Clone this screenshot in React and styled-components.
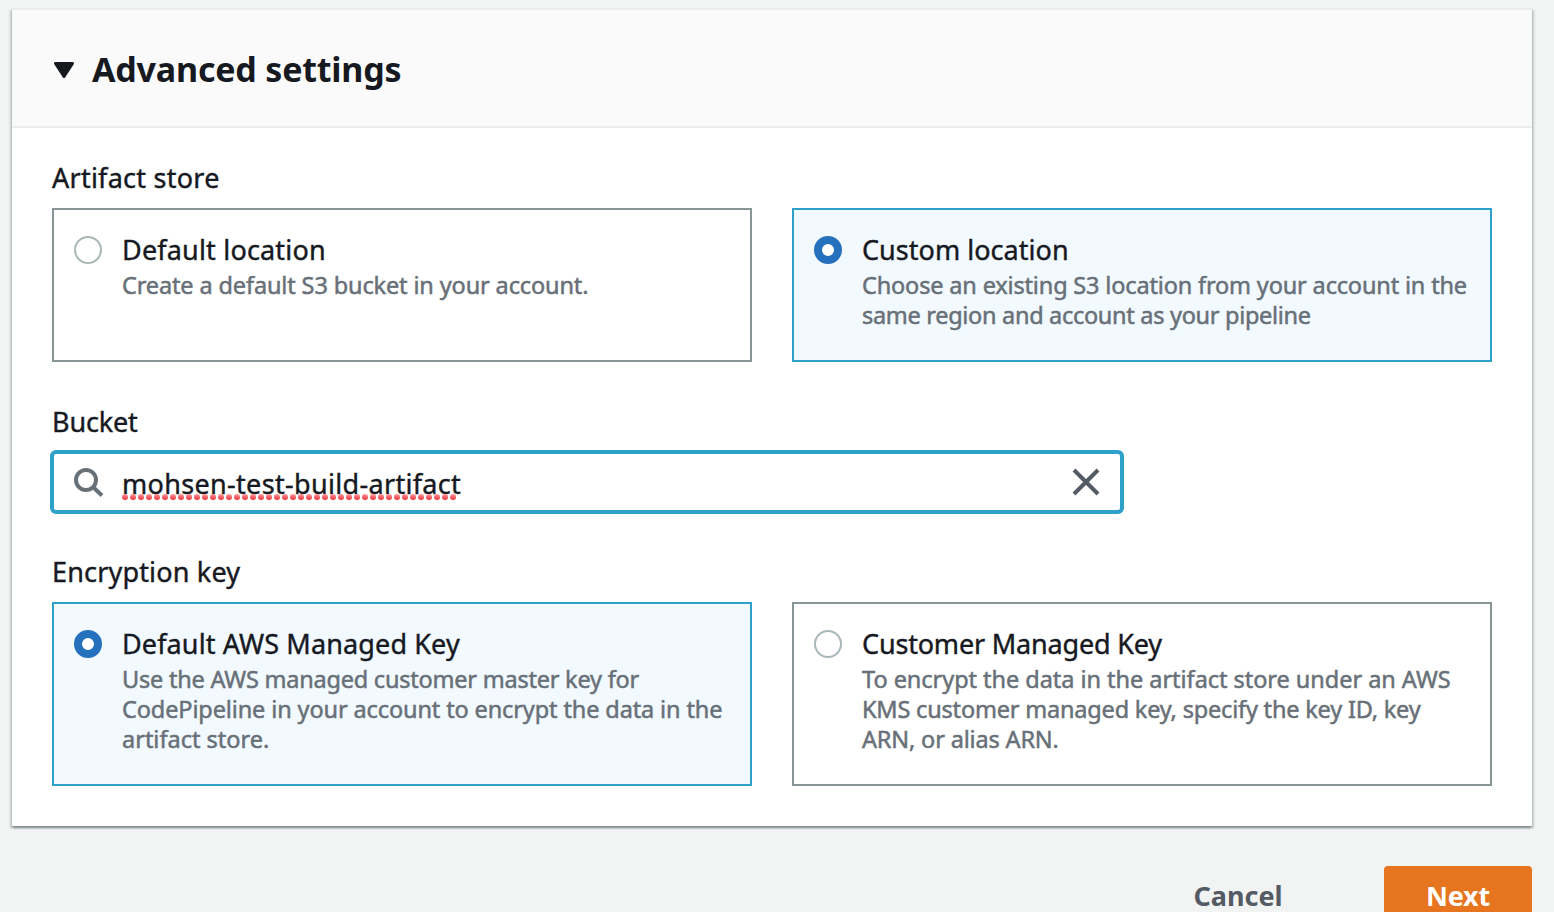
import React from 'react';
import styled, { createGlobalStyle } from 'styled-components';

const GlobalStyle = createGlobalStyle`
  * { box-sizing: border-box; }
  body {
    margin: 0;
    height: 912px;
    overflow: hidden;
    background: #f2f3f3;
    color: #16191f;
    font-family: 'Noto Sans', 'Open Sans', sans-serif;
  }
`;

const Page = styled.main`
  padding: 8px 22px 0 12px;
`;

const Panel = styled.section`
  border-top: 2px solid #eaeded;
  background: #fff;
  box-shadow:
    0 2px 2px 0 rgba(0, 28, 36, 0.3),
    2px 2px 2px 0 rgba(0, 28, 36, 0.15),
    -2px 2px 2px 0 rgba(0, 28, 36, 0.15);
`;

const PanelHeader = styled.header`
  display: flex;
  align-items: center;
  gap: 18px;
  height: 118px;
  padding: 4px 42px 0;
  border-bottom: 2px solid #eaeded;
  background: #fafafa;
`;

const PanelTitle = styled.h2`
  margin: 0;
  padding-bottom: 2px;
  font-size: 34px;
  font-weight: 700;
  line-height: 46px;
  letter-spacing: -0.2px;
`;

const PanelBody = styled.div`
  display: flex;
  flex-direction: column;
  padding: 32px 40px 40px;
`;

const Field = styled.div`
  display: flex;
  flex-direction: column;
  margin-bottom: ${(p) => p.$after || 0}px;
`;

const Label = styled.span`
  margin-bottom: ${(p) => p.$gap ?? 12}px;
  font-size: 27px;
  line-height: 36px;
  letter-spacing: ${(p) => p.$tracking}px;
  white-space: nowrap;
  -webkit-text-stroke: 0.4px currentColor;
`;

const TileGrid = styled.div`
  display: grid;
  grid-template-columns: 1fr 1fr;
  gap: 40px;
`;

const Tile = styled.label`
  display: flex;
  gap: 20px;
  padding: 22px 0 30px 20px;
  border: 2px solid ${(p) => (p.$selected ? '#2ea1cb' : '#879596')};
  background: ${(p) => (p.$selected ? '#f2f9ff' : '#fff')};
`;

const Radio = styled.span`
  flex: none;
  width: 28px;
  height: 28px;
  margin-top: 4px;
  border: ${(p) => (p.$selected ? '8px solid #2571bd' : '2px solid #aab7b8')};
  border-radius: 50%;
  background: #fff;
`;

const TileText = styled.div`
  display: flex;
  flex-direction: column;
`;

const TileDescription = styled.div`
  color: #687078;
  font-size: 23.5px;
  line-height: 30px;
  white-space: nowrap;
  -webkit-text-stroke: 0.5px currentColor;
`;

const Line = styled.span`
  display: block;
  letter-spacing: ${(p) => p.$tracking}px;
`;

const SearchBox = styled.div`
  display: flex;
  align-items: center;
  width: 1074px;
  height: 64px;
  margin-left: -2px;
  padding: 0 20px;
  border: 4px solid #2ea1cb;
  border-radius: 6px;
  background: #fff;
`;

const SearchValue = styled.span`
  position: relative;
  margin: 3px auto 0 18px;
  font-size: 27px;
  line-height: 36px;
  letter-spacing: 0.32px;
  white-space: nowrap;
  -webkit-text-stroke: 0.4px currentColor;
`;

const SpellingDots = styled.svg`
  position: absolute;
  left: 0;
  top: 28px;
`;

const Actions = styled.footer`
  display: flex;
  justify-content: flex-end;
  margin-top: 40px;
`;

const Button = styled.button`
  width: ${(p) => (p.$primary ? 148 : 172)}px;
  height: 60px;
  margin: 0 ${(p) => (p.$primary ? 0 : 60)}px 0 0;
  padding: 0;
  border: 0;
  border-radius: 4px;
  background: ${(p) => (p.$primary ? '#e7741e' : 'transparent')};
  color: ${(p) => (p.$primary ? '#fff' : '#545b64')};
  font: 700 27px/36px 'Noto Sans', 'Open Sans', sans-serif;
  letter-spacing: ${(p) => p.$tracking}px;
`;

function CaretIcon() {
  return (
    <svg width="20" height="16" viewBox="0 0 20 16">
      <path d="M1.5 1.5h17L10 14.5z" fill="#16191f" stroke="#16191f" strokeWidth="3" strokeLinejoin="round" />
    </svg>
  );
}

function SearchIcon() {
  return (
    <svg width="30" height="30" viewBox="0 0 30 30" fill="none" stroke="#687078" strokeWidth="4">
      <circle cx="12" cy="13" r="10" />
      <path d="M19 20l9 8.5" />
    </svg>
  );
}

function CloseIcon() {
  return (
    <svg width="28" height="28" viewBox="0 0 28 28" fill="none" stroke="#545b64" strokeWidth="4">
      <path d="M2 2l24 24M26 2L2 26" />
    </svg>
  );
}

function Option({ title, tracking, lines, selected }) {
  return (
    <Tile $selected={selected}>
      <Radio $selected={selected} />
      <TileText>
        <Label $tracking={tracking} $gap={2}>{title}</Label>
        <TileDescription>
          {lines.map(([text, spacing]) => (
            <Line key={text} $tracking={spacing}>{text}</Line>
          ))}
        </TileDescription>
      </TileText>
    </Tile>
  );
}

export default function App() {
  return (
    <Page>
      <GlobalStyle />
      <Panel>
        <PanelHeader>
          <CaretIcon />
          <PanelTitle>Advanced settings</PanelTitle>
        </PanelHeader>
        <PanelBody>
          <Field $after={42}>
            <Label $tracking={0.25}>Artifact store</Label>
            <TileGrid>
              <Option
                title="Default location"
                tracking={0.18}
                lines={[['Create a default S3 bucket in your account.', -0.13]]}
              />
              <Option
                selected
                title="Custom location"
                tracking={0.03}
                lines={[
                  ['Choose an existing S3 location from your account in the', -0.16],
                  ['same region and account as your pipeline', -0.3],
                ]}
              />
            </TileGrid>
          </Field>
          <Field $after={40}>
            <Label $tracking={-0.15} $gap={10}>Bucket</Label>
            <SearchBox>
              <SearchIcon />
              <SearchValue>
                mohsen-test-build-artifact
                <SpellingDots width="336" height="6">
                  <defs>
                    <linearGradient id="dotShade" x1="0" y1="0" x2="0" y2="1">
                      <stop offset="0" stopColor="#ff9c9c" />
                      <stop offset="1" stopColor="#f5303a" />
                    </linearGradient>
                    <pattern id="dots" width="8" height="6" patternUnits="userSpaceOnUse">
                      <circle cx="3" cy="3" r="3" fill="url(#dotShade)" />
                    </pattern>
                  </defs>
                  <rect width="336" height="6" fill="url(#dots)" stroke="none" />
                </SpellingDots>
              </SearchValue>
              <CloseIcon />
            </SearchBox>
          </Field>
          <Field>
            <Label $tracking={0.17}>Encryption key</Label>
            <TileGrid>
              <Option
                selected
                title="Default AWS Managed Key"
                tracking={0.12}
                lines={[
                  ['Use the AWS managed customer master key for', -0.22],
                  ['CodePipeline in your account to encrypt the data in the', -0.12],
                  ['artifact store.', 0],
                ]}
              />
              <Option
                title="Customer Managed Key"
                tracking={-0.18}
                lines={[
                  ['To encrypt the data in the artifact store under an AWS', -0.04],
                  ['KMS customer managed key, specify the key ID, key', -0.19],
                  ['ARN, or alias ARN.', -0.16],
                ]}
              />
            </TileGrid>
          </Field>
        </PanelBody>
      </Panel>
      <Actions>
        <Button $tracking={0}>Cancel</Button>
        <Button $primary $tracking={-0.2}>Next</Button>
      </Actions>
    </Page>
  );
}
